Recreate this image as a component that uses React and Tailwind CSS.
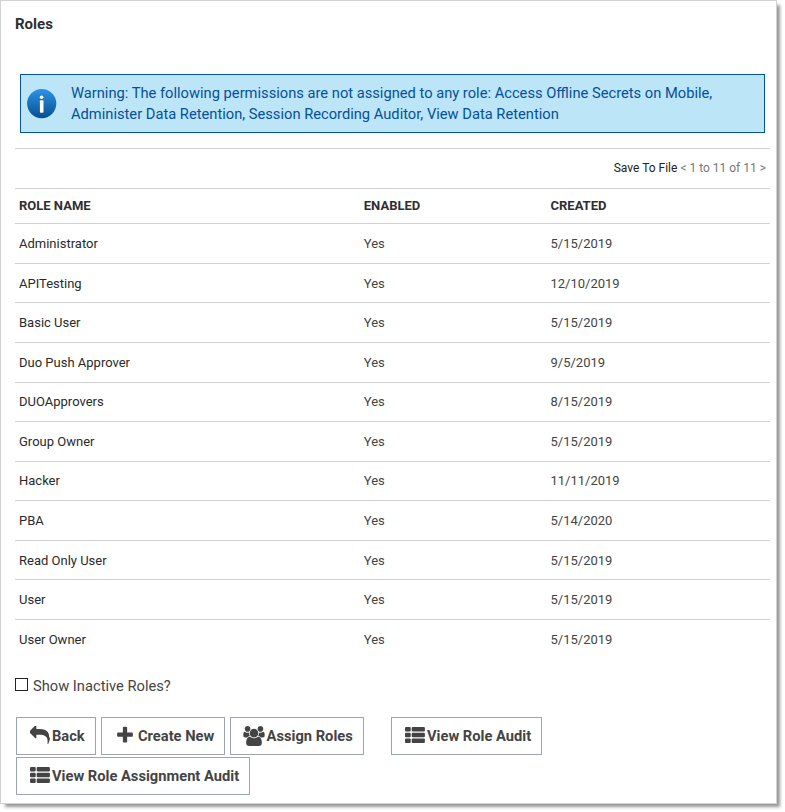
import React from "react";

const roles = [
  ["Administrator", "5/15/2019"],
  ["APITesting", "12/10/2019"],
  ["Basic User", "5/15/2019"],
  ["Duo Push Approver", "9/5/2019"],
  ["DUOApprovers", "8/15/2019"],
  ["Group Owner", "5/15/2019"],
  ["Hacker", "11/11/2019"],
  ["PBA", "5/14/2020"],
  ["Read Only User", "5/15/2019"],
  ["User", "5/15/2019"],
  ["User Owner", "5/15/2019"],
];

const ReplyIcon = () => (
  <svg className="h-5 w-5 shrink-0" viewBox="0 45 1792 1792" fill="currentColor">
    <path d="M1792 1120q0 166-127 451-3 7-10.5 24t-13.5 30-13 22q-12 17-28 17-15 0-23.5-10t-8.5-25q0-9 2.5-26.5t2.5-23.5q5-68 5-123 0-112-19.5-200.5t-53.5-153.5-88-112.5-115-80.5-145.5-51.5-168.5-26.5-195-8h-224v256q0 26-19 45t-45 19-45-19l-512-512q-19-19-19-45t19-45l512-512q19-19 45-19t45 19 19 45v256h224q713 0 875 403 53 134 53 333z" />
  </svg>
);

const PlusIcon = () => (
  <svg className="h-5 w-5 shrink-0" viewBox="0 60 1792 1792" fill="currentColor">
    <path d="M1600 736v192q0 40-28 68t-68 28h-416v416q0 40-28 68t-68 28h-192q-40 0-68-28t-28-68v-416h-416q-40 0-68-28t-28-68v-192q0-40 28-68t68-28h416v-416q0-40 28-68t68-28h192q40 0 68 28t28 68v416h416q40 0 68 28t28 68z" />
  </svg>
);

const UsersIcon = () => (
  <svg className="-ml-px h-5 w-[22px] shrink-0" viewBox="64 0 1920 1792" fill="currentColor">
    <path d="M657 896q-162 5-265 128h-134q-82 0-138-40.5t-56-118.5q0-353 124-353 6 0 43.5 21t97.5 42.5 119 21.5q67 0 133-23-5 37-5 66 0 139 81 256zm1071 637q0 120-73 189.5t-194 69.5h-874q-121 0-194-69.5t-73-189.5q0-53 3.5-103.5t14-109 26.5-108.5 43-97.5 62-81 85.5-53.5 111.5-20q10 0 43 21.5t73 48 107 48 135 21.5 135-21.5 107-48 73-48 43-21.5q61 0 111.5 20t85.5 53.5 62 81 43 97.5 26.5 108.5 14 109 3.5 103.5zm-1024-1277q0 106-75 181t-181 75-181-75-75-181 75-181 181-75 181 75 75 181zm704 384q0 159-112.5 271.5t-271.5 112.5-271.5-112.5-112.5-271.5 112.5-271.5 271.5-112.5 271.5 112.5 112.5 271.5zm576 225q0 78-56 118.5t-138 40.5h-134q-103-123-265-128 81-117 81-256 0-29-5-66 66 23 133 23 59 0 119-21.5t97.5-42.5 43.5-21q124 0 124 353zm-128-609q0 106-75 181t-181 75-181-75-75-181 75-181 181-75 181 75 75 181z" />
  </svg>
);

const ListIcon = () => (
  <svg className="h-5 w-5 shrink-0" viewBox="0.3 0 20 20" fill="currentColor">
    {[1, 6.8, 12.5].map((y) => (
      <g key={y}>
        <rect x="0.3" y={y} width="5.7" height="4.4" rx="1" />
        <rect x="7" y={y} width="13.2" height="4.4" rx="1" />
      </g>
    ))}
  </svg>
);

const InfoIcon = () => (
  <svg className="mt-[14px] h-[30px] w-[30px] shrink-0" viewBox="0.3 0.5 30 30">
    <defs>
      <linearGradient id="info" x1="0" y1="0" x2="0" y2="1">
        <stop offset="0" stopColor="#2f92e6" />
        <stop offset="1" stopColor="#05508f" />
      </linearGradient>
    </defs>
    <circle cx="15" cy="15.1" r="14.6" fill="url(#info)" />
    <circle cx="14.9" cy="8.7" r="1.8" fill="#fff" />
    <rect x="13.2" y="11.8" width="3.6" height="12.4" rx="0.9" fill="#fff" />
  </svg>
);

function Button({ className, children }) {
  return (
    <button className={"flex h-[38px] shrink-0 items-center border border-[#9aa5b1] pl-[12.6px] text-[14.69px] font-bold whitespace-nowrap text-[#444] " + className}>
      {children}
    </button>
  );
}

export default function App() {
  return (
    <div className="h-[812px] w-[785px] overflow-hidden bg-white font-['Roboto',sans-serif] text-[#444]">
      <main className="h-[804px] w-[777px] border border-[#d2d2d2] bg-white pr-[6px] pl-[14px] shadow-[4px_4px_3px_-1px_#999]">
        <h1 className="mt-[12px] h-[22px] text-[15px] leading-[22px] font-bold text-[#2f2f2f]">Roles</h1>
        <section className="mt-[39px] mr-[5px] ml-[5px] flex h-[59px] border border-[#04559f] bg-[#bce5f7] pl-[5.7px] text-[#04509b]">
          <InfoIcon />
          <p className="ml-[14.3px] pt-[8px] text-[14.69px] leading-[21px] whitespace-nowrap">
            Warning: The following permissions are not assigned to any role: Access Offline Secrets on Mobile,
            <br />
            Administer Data Retention, Session Recording Auditor, View Data Retention
          </p>
        </section>
        <div className="mt-[15px] flex h-[40px] items-center justify-end border-t border-[#d2d2d2] pr-[4px] pb-[2px] text-[12px] text-[#777]">
          <span className="mr-[3px] text-[#222]">Save To File</span>
          <span>&lt; 1 to 11 of 11 &gt;</span>
        </div>
        <div className="grid h-[35.2px] grid-cols-[344.8px_186.7px_1fr] items-center border-t border-[#d2d2d2] pl-[4px] text-[13px] font-bold text-[#2f2f2f]">
          <span>ROLE NAME</span>
          <span>ENABLED</span>
          <span>CREATED</span>
        </div>
        {roles.map(([name, date]) => (
          <div key={name} className="grid h-[39.58px] grid-cols-[344.8px_186.7px_1fr] items-center border-t border-[#d2d2d2] pt-[0.48px] pl-[4px] text-[13px]">
            <span className="text-[#2a2a2a]">{name}</span>
            <span>Yes</span>
            <span>{date}</span>
          </div>
        ))}
        <label className="mt-[17px] flex h-[20px] items-center text-[14.69px]">
          <span className="mr-[5px] mb-[2px] h-[13px] w-[13px] border border-[#222]" />
          <span className="pt-px">Show Inactive Roles?</span>
        </label>
        <div className="mt-[21px] ml-px flex gap-[5px]">
          <Button className="w-[80px]"><ReplyIcon /><span className="ml-[2.4px]">Back</span></Button>
          <Button className="w-[124px]"><PlusIcon /><span className="ml-[3.4px]">Create New</span></Button>
          <Button className="w-[134px]"><UsersIcon /><span className="ml-[2px]">Assign Roles</span></Button>
          <Button className="ml-[22px] w-[151px]"><ListIcon /><span className="ml-[2.4px]">View Role Audit</span></Button>
        </div>
        <div className="mt-[2px] ml-px flex">
          <Button className="w-[234px]"><ListIcon /><span className="ml-[2.4px]">View Role Assignment Audit</span></Button>
        </div>
      </main>
    </div>
  );
}
